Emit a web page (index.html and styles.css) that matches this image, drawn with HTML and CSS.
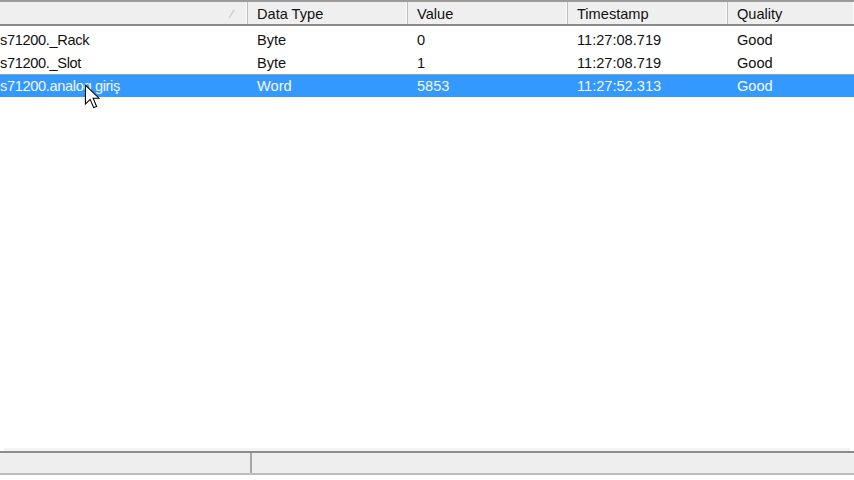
FILE: index.html
```html
<!DOCTYPE html>
<html lang="tr">
<head>
  <meta charset="UTF-8">
  <title>OPC Items</title>
  <link rel="stylesheet" href="styles.css">
</head>
<body>
<div class="window">
  <div class="list">
    <div class="header">
      <div class="col c-name"><span class="sort">&#x2215;</span></div>
      <div class="col c-type">Data Type</div>
      <div class="col c-val">Value</div>
      <div class="col c-time">Timestamp</div>
      <div class="col c-qual">Quality</div>
    </div>

    <div class="row">
      <div class="cell c-name">s71200._Rack</div>
      <div class="cell c-type">Byte</div>
      <div class="cell c-val">0</div>
      <div class="cell c-time">11:27:08.719</div>
      <div class="cell c-qual">Good</div>
    </div>
    <div class="row">
      <div class="cell c-name">s71200._Slot</div>
      <div class="cell c-type">Byte</div>
      <div class="cell c-val">1</div>
      <div class="cell c-time">11:27:08.719</div>
      <div class="cell c-qual">Good</div>
    </div>
    <div class="row selected">
      <div class="cell c-name">s71200.analog giriş</div>
      <div class="cell c-type">Word</div>
      <div class="cell c-val">5853</div>
      <div class="cell c-time">11:27:52.313</div>
      <div class="cell c-qual">Good</div>
    </div>
  </div>

  <div class="hscroll">
    <div class="pane left"></div>
    <div class="pane right"></div>
  </div>
</div>

<!-- mouse pointer -->
<svg class="cursor" width="17" height="26" viewBox="0 0 14 22">
  <path d="M1 1 L1 17 L5 13 L8 20 L10.5 19 L7.5 12 L12.5 12 Z" fill="#fff" stroke="#000" stroke-width="0.9" stroke-linejoin="miter"/>
</svg>
</body>
</html>
```

FILE: styles.css
```css
* { box-sizing: border-box; }
body {
  margin: 0;
  padding: 0;
  background: #fff;
  font-family: 'Liberation Sans', Arial, sans-serif;
  font-size: 14.6px;
  color: #111;
  overflow: hidden;
}
.window {
  width: 854px;
  height: 480px;
  display: flex;
  flex-direction: column;
}
.list {
  flex: 1;
}
.header {
  display: flex;
  height: 26px;
  background: #efefef;
  border-top: 2px solid #9a9a9a;
  border-bottom: 2px solid #8a8a8a;
  margin-bottom: 2px;
}
.col {
  display: flex;
  align-items: center;
  padding-left: 9px;
  padding-top: 1px;
  border-right: 1px solid #bcbcbc;
  box-shadow: inset -1px 0 0 #fdfdfd;
  color: #111;
}
.c-name { width: 248px; }
.c-type { width: 160px; }
.c-val { width: 160px; }
.c-time { width: 160px; }
.c-qual { flex: 1; border-right: none; }
.header .c-name {
  justify-content: flex-end;
  padding-right: 14px;
}
.sort {
  color: #b8b8b8;
  font-size: 12px;
}
.row {
  display: flex;
  height: 23px;
  align-items: center;
}
.cell {
  padding-left: 9px;
  white-space: nowrap;
  overflow: hidden;
}
.row .c-name {
  padding-left: 0;
  letter-spacing: -0.35px;
}
.selected {
  background: #3399ff;
  color: #f4f8ff;
  border-top: 1px solid #8fa3b8;
}
.hscroll {
  display: flex;
  height: 24px;
  margin-bottom: 5px;
  background: #eeeeee;
  border-top: 2px solid #8c8c8c;
  border-bottom: 2px solid #bdbdbd;
  box-shadow: 0 -7px 0 -4px #f3f3f3;
}
.pane.left {
  width: 252px;
  border-right: 2px solid #a8a8a8;
}
.pane.right { flex: 1; }
.cursor {
  position: absolute;
  left: 84px;
  top: 84px;
}
```
